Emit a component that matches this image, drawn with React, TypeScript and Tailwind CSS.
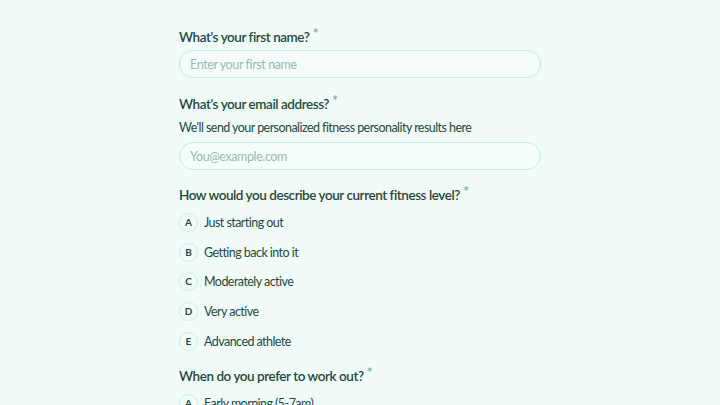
import { useState } from "react";

const fitnessLevels = ["Just starting out", "Getting back into it", "Moderately active", "Very active", "Advanced athlete"];
const workoutTimes = ["Early morning (5-7am)", "Morning (7-10am)", "Midday", "Evening"];
const letters = ["A", "B", "C", "D", "E"];

function Label({ children }: { children: React.ReactNode }) {
  return (
    <div className="flex items-start text-[13.5px] leading-[18px] font-semibold tracking-[-0.45px] text-[#1f4a3c]">
      {children}
      <span className="ml-[3px] -mt-[4px] text-[15px] font-normal text-[#6aa593]">*</span>
    </div>
  );
}

function Options({ items, value, onChange }: { items: string[]; value: number | null; onChange: (i: number) => void }) {
  return (
    <div className="flex flex-col gap-[10.7px] mt-[9px]">
      {items.map((item, i) => (
        <button key={item} onClick={() => onChange(i)} className="flex items-center gap-[6px] text-left">
          <span
            className={
              "w-[19px] h-[19px] rounded-full border flex items-center justify-center text-[10px] font-bold " +
              (value === i ? "bg-[#1f4a3c] border-[#1f4a3c] text-white" : "bg-[#f3fcf9] border-[#cdeee4] text-[#1f4a3c]")
            }
          >
            {letters[i]}
          </span>
          <span className="text-[12.5px] leading-[19px] tracking-[-0.55px] text-[#1f4a3c]">{item}</span>
        </button>
      ))}
    </div>
  );
}

export default function App() {
  const [name, setName] = useState("");
  const [email, setEmail] = useState("");
  const [level, setLevel] = useState<number | null>(null);
  const [time, setTime] = useState<number | null>(null);

  return (
    <div className="h-[405px] overflow-hidden bg-[#f1fbf8]" style={{ fontFamily: "Lato, 'Noto Sans', sans-serif" }}>
      <div className="w-[362px] ml-[179px] pt-[28px] flex flex-col">
        <Label>What's your first name?</Label>
        <input
          value={name}
          onChange={(e) => setName(e.target.value)}
          placeholder="Enter your first name"
          className="mt-[4px] h-[28px] rounded-full border border-[#c8ece1] bg-[#f4fdfa] px-[10px] text-[12.5px] tracking-[-0.4px] text-[#1f4a3c] placeholder:text-[#96bcae] focus:outline-none"
        />

        <div className="mt-[17px]">
          <Label>What's your email address?</Label>
        </div>
        <p className="mt-[7px] text-[12.5px] leading-[16px] tracking-[-0.55px] text-[#1f4a3c]">We'll send your personalized fitness personality results here</p>
        <input
          value={email}
          onChange={(e) => setEmail(e.target.value)}
          placeholder="You@example.com"
          className="mt-[6px] h-[28px] rounded-full border border-[#c8ece1] bg-[#f4fdfa] px-[10px] text-[12.5px] tracking-[-0.4px] text-[#1f4a3c] placeholder:text-[#96bcae] focus:outline-none"
        />

        <div className="mt-[16px]">
          <Label>How would you describe your current fitness level?</Label>
        </div>
        <Options items={fitnessLevels} value={level} onChange={setLevel} />

        <div className="mt-[16px]">
          <Label>When do you prefer to work out?</Label>
        </div>
        <Options items={workoutTimes} value={time} onChange={setTime} />
      </div>
    </div>
  );
}
